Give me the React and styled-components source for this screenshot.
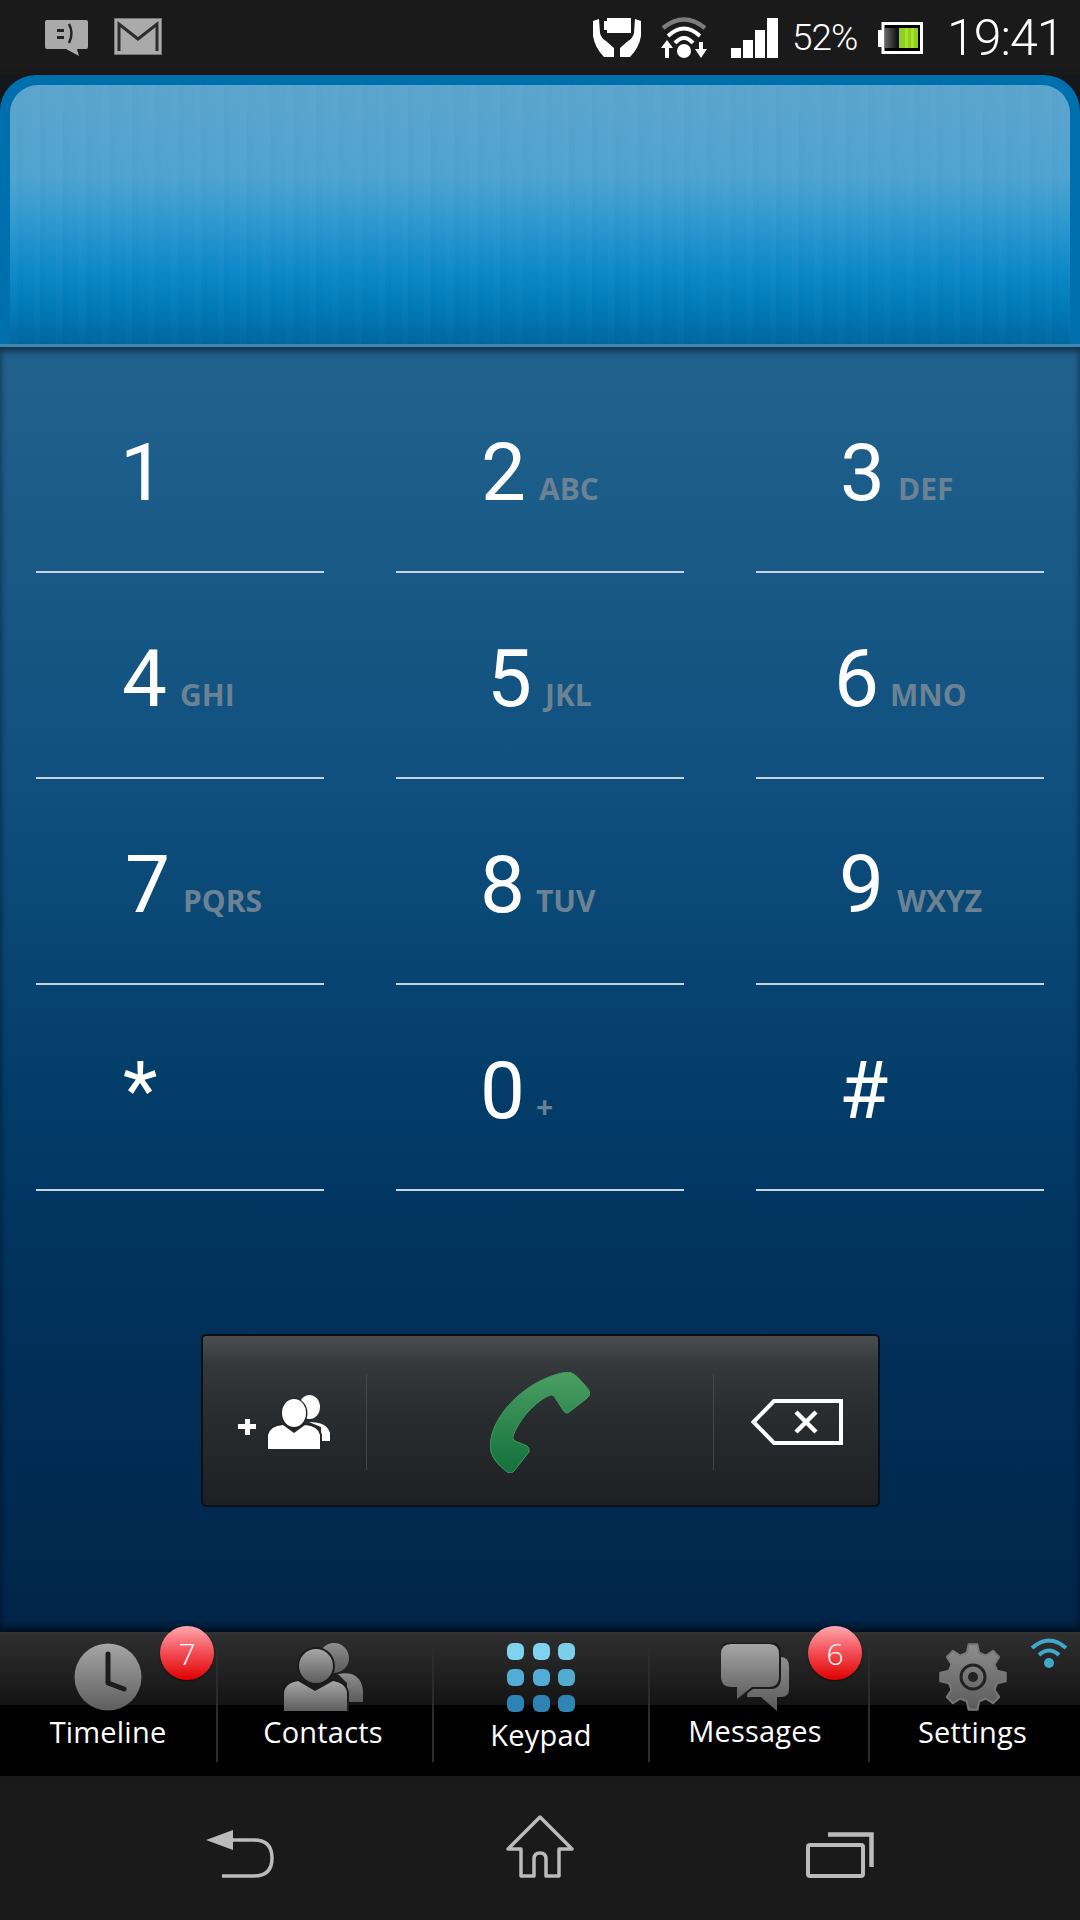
import React from 'react';
import styled, { createGlobalStyle } from 'styled-components';

const GlobalStyle = createGlobalStyle`
  html, body {
    margin: 0;
    padding: 0;
    background: #1a1a1a;
  }
  * {
    box-sizing: border-box;
  }
`;

const Phone = styled.div`
  width: 1080px;
  height: 1920px;
  display: flex;
  flex-direction: column;
  overflow: hidden;
  font-family: 'Open Sans', 'Noto Sans', sans-serif;
  background: #1a1a1a;
`;

const StatusBar = styled.div`
  height: 75px;
  flex: none;
  display: flex;
  align-items: flex-start;
  background: #1a1a1a;
  color: #fff;
`;

const StatusIcon = styled.svg`
  flex: none;
  display: block;
  margin-left: ${(p) => p.$left}px;
  margin-top: ${(p) => p.$top}px;
`;

const Percent = styled.span`
  width: 66px;
  margin-left: 14px;
  margin-top: 13px;
  font-family: Roboto, 'Open Sans', sans-serif;
  font-size: 37px;
  line-height: 50px;
  font-weight: 300;
  letter-spacing: -1px;
  white-space: nowrap;
`;

const Clock = styled.span`
  margin-left: 24px;
  margin-top: 4px;
  font-family: Roboto, 'Open Sans', sans-serif;
  font-size: 50px;
  line-height: 68px;
  font-weight: 300;
  letter-spacing: -1px;
  white-space: nowrap;
`;

const Dialer = styled.main`
  height: 1557px;
  flex: none;
  display: flex;
  flex-direction: column;
  align-items: center;
  background: linear-gradient(#22628e 272px, #0e4f7d 725px, #033c69 1025px, #01305a 1245px, #012548 100%);
  box-shadow: inset 6px 0 5px -4px rgba(0, 0, 0, 0.35), inset -6px 0 5px -4px rgba(0, 0, 0, 0.35);
`;

const DisplayFrame = styled.div`
  width: 100%;
  height: 272px;
  flex: none;
  background: #14181c;
  box-shadow: 0 4px 7px rgba(0, 0, 0, 0.55);
`;

const Display = styled.div`
  height: 100%;
  padding: 10px 10px 0;
  border-radius: 36px 36px 0 0;
  background: #006fae;
  border-bottom: 3px solid #3d88b0;
`;

const DisplayGlass = styled.div`
  height: 100%;
  border-radius: 28px 28px 0 0;
  background:
    repeating-linear-gradient(90deg, rgba(255, 255, 255, 0.014) 0 7px, rgba(0, 0, 0, 0.012) 7px 13px, rgba(255, 255, 255, 0) 13px 23px),
    linear-gradient(#5ca5cd 0, #4fa3d0 35%, #2f99cf 52%, #0d88c8 72%, #0078b6 88%, #00669f 100%);
`;

const KeyGrid = styled.div`
  width: 100%;
  padding: 20px 36px 0;
  display: grid;
  grid-template-columns: repeat(3, 288px);
  grid-auto-rows: 206px;
  column-gap: 72px;
`;

const Key = styled.div`
  display: flex;
  align-items: baseline;
  padding-left: ${(p) => p.$indent}px;
  padding-top: 66px;
  border-bottom: 2px solid #c6d2dc;
  color: #fff;
`;

const Digit = styled.span`
  font-family: Roboto, 'Open Sans', sans-serif;
  font-size: 80px;
  line-height: 80px;
  font-weight: 400;
`;

const Letters = styled.span`
  margin-left: ${(p) => p.$gap}px;
  font-size: 30px;
  font-weight: 700;
  color: #6b8295;
`;

const CallBar = styled.div`
  width: 679px;
  height: 173px;
  margin-top: 143px;
  padding-top: 38px;
  display: flex;
  align-items: flex-start;
  border: 2px solid #0a1016;
  border-radius: 5px;
  background: linear-gradient(#4b4e51 0, #36393b 16%, #2a2d2f 45%, #1d1f22 100%);
`;

const CallSlot = styled.div`
  width: ${(p) => p.$width}px;
  height: 96px;
  flex: none;
  display: flex;
  align-items: center;
  justify-content: center;
  ${(p) => p.$divided && 'border-right: 1px solid #44474a;'}
`;

const TabBar = styled.nav`
  position: relative;
  height: 144px;
  flex: none;
  display: flex;
  border-top: 2px solid #333;
  background: linear-gradient(#2f2f2f 0, #141414 71px, #000 71px, #000 100%);
  box-shadow: 0 -5px 8px rgba(0, 0, 0, 0.6);
`;

const Tab = styled.div`
  position: relative;
  width: ${(p) => p.$width}px;
  flex: none;
  display: flex;
  flex-direction: column;
  align-items: center;
  padding-top: 9px;
  padding-right: ${(p) => p.$inset}px;
`;

const TabDivider = styled.div`
  width: 2px;
  height: 114px;
  flex: none;
  margin-top: 14px;
  background: #2b2b2b;
`;

const TabLabel = styled.span`
  margin-top: ${(p) => p.$top}px;
  font-size: 29px;
  line-height: 40px;
  letter-spacing: 0.2px;
  color: #fff;
  white-space: nowrap;
`;

const Badge = styled.span`
  position: absolute;
  top: -8px;
  left: ${(p) => p.$left}px;
  width: 54px;
  height: 54px;
  display: flex;
  align-items: center;
  justify-content: center;
  border-radius: 50%;
  background: linear-gradient(#ffa8ae 0, #f4545c 45%, #e00000 100%);
  box-shadow: 0 1px 2px rgba(0, 0, 0, 0.5);
  font-size: 30px;
  font-weight: 300;
  color: #fff;
`;

const SignalMark = styled.svg`
  position: absolute;
  top: 3px;
  right: 12px;
`;

const DotGrid = styled.div`
  width: 68px;
  height: 69px;
  display: grid;
  grid-template-columns: repeat(3, 17px);
  grid-auto-rows: 17px;
  justify-content: space-between;
  align-content: space-between;
`;

const Dot = styled.span`
  border-radius: 6px;
  background: ${(p) => p.$color};
`;

const NavBar = styled.div`
  flex: 1;
  display: grid;
  grid-template-columns: repeat(3, 1fr);
  justify-items: center;
  align-items: end;
  padding: 0 90px 42px;
  background: #1a1a1a;
`;

const keys = [
  { digit: '1', indent: 84 },
  { digit: '2', letters: 'ABC', indent: 85, gap: 13 },
  { digit: '3', letters: 'DEF', indent: 84, gap: 13 },
  { digit: '4', letters: 'GHI', indent: 86, gap: 13 },
  { digit: '5', letters: 'JKL', indent: 91, gap: 13 },
  { digit: '6', letters: 'MNO', indent: 78, gap: 11 },
  { digit: '7', letters: 'PQRS', indent: 89, gap: 13 },
  { digit: '8', letters: 'TUV', indent: 84, gap: 11 },
  { digit: '9', letters: 'WXYZ', indent: 83, gap: 13 },
  { digit: '*', indent: 87 },
  { digit: '0', letters: '+', indent: 84, gap: 11 },
  { digit: '#', indent: 83 },
];

const dotColors = ['#7fd2f0', '#7fd2f0', '#7bcfe9', '#52acd6', '#52acd6', '#52acd0', '#2f82b4', '#2f82b4', '#2f86b4'];

const gearPath = (cx, cy, teeth, outer, inner) => {
  const step = (Math.PI * 2) / teeth;
  const pt = (r, a) => `${(cx + r * Math.cos(a)).toFixed(2)} ${(cy + r * Math.sin(a)).toFixed(2)}`;
  let d = '';
  for (let i = 0; i < teeth; i++) {
    const a = i * step - Math.PI / 2;
    d += `${i ? 'L' : 'M'}${pt(inner, a - step * 0.32)} L${pt(outer, a - step * 0.17)} L${pt(outer, a + step * 0.17)} L${pt(inner, a + step * 0.32)} `;
  }
  return d + 'Z';
};

const IconGradients = () => (
  <svg width="0" height="0" style={{ position: 'absolute' }}>
    <defs>
      <linearGradient id="tabGrey" x1="0" y1="0" x2="0" y2="1">
        <stop offset="0" stopColor="#a6a6a6" />
        <stop offset="1" stopColor="#5e5e5e" />
      </linearGradient>
      <linearGradient id="tabGreyDark" x1="0" y1="0" x2="0" y2="1">
        <stop offset="0" stopColor="#8e8e8e" />
        <stop offset="1" stopColor="#5a5a5a" />
      </linearGradient>
      <linearGradient id="callGreen" x1="0" y1="0" x2="0" y2="1">
        <stop offset="0" stopColor="#4b9f63" />
        <stop offset="1" stopColor="#12703a" />
      </linearGradient>
      <linearGradient id="battLeft" x1="0" y1="0" x2="1" y2="0">
        <stop offset="0" stopColor="#666" />
        <stop offset="1" stopColor="#000" />
      </linearGradient>
    </defs>
  </svg>
);

const BubbleIcon = () => (
  <StatusIcon $left={45} $top={20} width="43" height="36" viewBox="0 0 43 36">
    <path d="M2 0H41Q43 0 43 2V27Q43 29 41 29H32L34 36L21 29H2Q0 29 0 27V2Q0 0 2 0Z" fill="#aaa" />
    <rect x="12" y="9" width="7" height="3" fill="#222" />
    <rect x="12" y="16" width="7" height="3" fill="#222" />
    <path d="M24 4Q29 13 24 23" fill="none" stroke="#222" strokeWidth="2.5" />
  </StatusIcon>
);

const MailIcon = () => (
  <StatusIcon $left={26} $top={18} width="48" height="37" viewBox="0 0 48 37">
    <rect x="0.5" y="0.5" width="47" height="36" fill="#aaa" stroke="#777" />
    <path d="M5 33V6L24 21L43 6V33" fill="none" stroke="#2c2c2c" strokeWidth="3" />
  </StatusIcon>
);

const HandsIcon = () => (
  <StatusIcon $left={431} $top={18} width="48" height="39" viewBox="0 0 48 39">
    <path d="M14 0H38V15H14V12H11V3H14Z" fill="#fff" />
    <path d="M0 3L6 1L7 15Q8 20 13 23L21 30V39H11Q2 30 0 18Z" fill="#fff" />
    <path d="M48 3L42 1L41 15Q40 20 35 23L27 30V39H37Q46 30 48 18Z" fill="#fff" />
  </StatusIcon>
);

const DataIcon = () => (
  <StatusIcon $left={20} $top={16} width="46" height="43" viewBox="0 0 46 43">
    <path d="M2 12Q23 -5 44 12" fill="none" stroke="#7c7c7c" strokeWidth="4.5" />
    <path d="M7 20Q23 5 39 20" fill="none" stroke="#fff" strokeWidth="4" />
    <path d="M14 27Q23 17 32 27" fill="none" stroke="#fff" strokeWidth="4" />
    <circle cx="23" cy="35" r="7" fill="#fff" />
    <path d="M6 24L12 32H8V42H4V32H0Z" fill="#fff" />
    <path d="M40 42L34 33H38V26H42V33H46Z" fill="#fff" />
  </StatusIcon>
);

const SignalIcon = () => (
  <StatusIcon $left={24} $top={18} width="47" height="40" viewBox="0 0 47 40">
    <rect x="0" y="30" width="10" height="10" fill="#fff" />
    <rect x="12" y="22" width="10" height="18" fill="#fff" />
    <rect x="24" y="12" width="10" height="28" fill="#fff" />
    <rect x="36" y="0" width="11" height="40" fill="#fff" />
  </StatusIcon>
);

const BatteryIcon = () => (
  <StatusIcon $left={20} $top={22} width="45" height="32" viewBox="0 0 45 32">
    <rect x="0" y="8" width="5" height="17" fill="#fff" />
    <rect x="5" y="1.5" width="38.5" height="29" fill="#000" stroke="#fff" strokeWidth="3" />
    <rect x="7" y="6" width="15" height="20" fill="url(#battLeft)" />
    <rect x="21" y="6" width="19" height="20" fill="#8fd11a" />
    <rect x="27" y="6" width="3" height="20" fill="#a5e032" />
    <rect x="33" y="6" width="3" height="20" fill="#a5e032" />
  </StatusIcon>
);

const AddContactIcon = () => (
  <svg width="94" height="54" viewBox="0 0 94 54">
    <path d="M8 24H13V29H19V34H13V40H8V34H1V29H8Z" fill="#fff" />
    <ellipse cx="72.5" cy="12" rx="10.5" ry="12" fill="#fff" />
    <path d="M72 27Q90 27 93 38V46H84V32Z" fill="#fff" />
    <ellipse cx="57" cy="18" rx="13.5" ry="15" fill="#222528" />
    <path d="M29 54V40Q31 29 46 28H68Q83 29 85 40V54Z" fill="#222528" />
    <ellipse cx="57" cy="18" rx="12" ry="14" fill="#fff" />
    <path d="M31 54V40Q33 31 46 30L57 38L68 30Q81 31 83 40V54Z" fill="#fff" />
  </svg>
);

const CallIcon = () => (
  <svg width="100" height="101" viewBox="0 0 100 101">
    <path
      d="M78 0Q84 0 92 10Q99 17 100 21Q100 24 96 27L78 41Q75 42 73 38L64 24Q62 22 58 24C42 32 28 50 23 64Q22 67 25 69L37 74Q40 76 39 80L24 99Q20 103 16 99Q4 90 1 80Q-1 72 2 62C10 35 40 8 72 1Z"
      fill="url(#callGreen)"
      stroke="#3f9a5b"
      strokeWidth="1"
    />
  </svg>
);

const BackspaceIcon = () => (
  <svg width="92" height="46" viewBox="0 0 92 46">
    <path d="M2.5 23L23 2H90V44H23Z" fill="none" stroke="#fff" strokeWidth="4" />
    <path d="M45 13L65 33M65 13L45 33" fill="none" stroke="#fff" strokeWidth="4.5" />
  </svg>
);

const ClockIcon = () => (
  <svg width="68" height="68" viewBox="0 0 68 68">
    <circle cx="34" cy="34" r="33.5" fill="url(#tabGrey)" />
    <path d="M34 11V40L50 46" fill="none" stroke="#1c1c1c" strokeWidth="5" strokeLinecap="round" strokeLinejoin="round" />
  </svg>
);

const ContactsIcon = () => (
  <svg width="79" height="68" viewBox="0 0 79 68">
    <path d="M54 31Q77 27 79 48V59H63V40Z" fill="url(#tabGreyDark)" />
    <circle cx="50" cy="15" r="15" fill="url(#tabGreyDark)" />
    <circle cx="32" cy="23" r="19" fill="#1b1b1b" />
    <path d="M-2 68V50Q0 38 14 36L31 46L49 36Q63 38 65 50V68Z" fill="#1b1b1b" />
    <circle cx="32" cy="23" r="17" fill="url(#tabGrey)" />
    <path d="M0 68V50Q1 40 14 38L31 48L49 38Q62 40 63 50V68Z" fill="url(#tabGrey)" />
  </svg>
);

const MessagesIcon = () => (
  <svg width="68" height="68" viewBox="0 0 68 68">
    <path d="M30 14H60Q68 14 68 24V46Q68 54 60 54H56V68L40 54H26Z" fill="url(#tabGreyDark)" />
    <path d="M10 -1H50Q60 -1 60 10V34Q60 46 50 46H32L16 58V46H10Q-1 46 -1 34V10Q-1 -1 10 -1Z" fill="#1b1b1b" />
    <path d="M10 1H48Q58 1 58 11V33Q58 44 48 44H31L16 56V44H10Q0 44 0 33V11Q0 1 10 1Z" fill="url(#tabGrey)" />
  </svg>
);

const GearIcon = () => (
  <svg width="68" height="68" viewBox="0 0 68 68">
    <path d={gearPath(34, 34, 8, 33, 25)} fill="url(#tabGreyDark)" strokeLinejoin="round" stroke="#777" strokeWidth="2" />
    <circle cx="34" cy="34" r="12" fill="none" stroke="#222" strokeWidth="3" />
    <circle cx="34" cy="34" r="5" fill="#222" />
  </svg>
);

const BackIcon = () => (
  <svg width="68" height="48" viewBox="0 0 68 48">
    <path d="M0 10L27 0V20Z" fill="#bbb" />
    <path d="M26 10H48Q66 10 66 28Q66 46 48 46H16" fill="none" stroke="#bbb" strokeWidth="3.5" />
  </svg>
);

const HomeIcon = () => (
  <svg width="68" height="63" viewBox="0 0 68 63">
    <path
      d="M34 2L66 34H53V61H40V44Q40 38 34 38Q28 38 28 44V61H15V34H2Z"
      fill="none"
      stroke="#bbb"
      strokeWidth="3.5"
      strokeLinejoin="round"
    />
  </svg>
);

const RecentsIcon = () => (
  <svg width="68" height="46" viewBox="0 0 68 46">
    <rect x="2" y="13" width="55" height="31" rx="2" fill="none" stroke="#bbb" strokeWidth="4" />
    <path d="M22 2.5H65.5V35" fill="none" stroke="#bbb" strokeWidth="4.5" />
  </svg>
);

const App = () => (
  <Phone>
    <GlobalStyle />
    <IconGradients />
    <StatusBar>
      <BubbleIcon />
      <MailIcon />
      <HandsIcon />
      <DataIcon />
      <SignalIcon />
      <Percent>52%</Percent>
      <BatteryIcon />
      <Clock>19:41</Clock>
    </StatusBar>
    <Dialer>
      <DisplayFrame>
        <Display>
          <DisplayGlass />
        </Display>
      </DisplayFrame>
      <KeyGrid>
        {keys.map((k) => (
          <Key key={k.digit} $indent={k.indent}>
            <Digit>{k.digit}</Digit>
            {k.letters && <Letters $gap={k.gap}>{k.letters}</Letters>}
          </Key>
        ))}
      </KeyGrid>
      <CallBar>
        <CallSlot $width={164} $divided>
          <AddContactIcon />
        </CallSlot>
        <CallSlot $width={347} $divided>
          <CallIcon />
        </CallSlot>
        <CallSlot $width={166}>
          <BackspaceIcon />
        </CallSlot>
      </CallBar>
    </Dialer>
    <TabBar>
      <Tab $width={216} $inset={0}>
        <ClockIcon />
        <TabLabel $top={1}>Timeline</TabLabel>
        <Badge $left={160}>7</Badge>
      </Tab>
      <TabDivider />
      <Tab $width={214} $inset={4}>
        <ContactsIcon />
        <TabLabel $top={1}>Contacts</TabLabel>
      </Tab>
      <TabDivider />
      <Tab $width={214} $inset={0}>
        <DotGrid>
          {dotColors.map((c, i) => (
            <Dot key={i} $color={c} />
          ))}
        </DotGrid>
        <TabLabel $top={3}>Keypad</TabLabel>
      </Tab>
      <TabDivider />
      <Tab $width={218} $inset={8}>
        <MessagesIcon />
        <TabLabel $top={0}>Messages</TabLabel>
        <Badge $left={158}>6</Badge>
      </Tab>
      <TabDivider />
      <Tab $width={210} $inset={5}>
        <GearIcon />
        <TabLabel $top={1}>Settings</TabLabel>
        <SignalMark width="38" height="32" viewBox="0 0 38 32">
          <path d="M2 11Q19 -4 36 11" fill="none" stroke="#3fa9c9" strokeWidth="4" />
          <path d="M9 18Q19 9 29 18" fill="none" stroke="#3fa9c9" strokeWidth="4" />
          <circle cx="19" cy="26" r="5" fill="#3fa9c9" />
        </SignalMark>
      </Tab>
    </TabBar>
    <NavBar>
      <BackIcon />
      <HomeIcon />
      <RecentsIcon />
    </NavBar>
  </Phone>
);

export default App;
